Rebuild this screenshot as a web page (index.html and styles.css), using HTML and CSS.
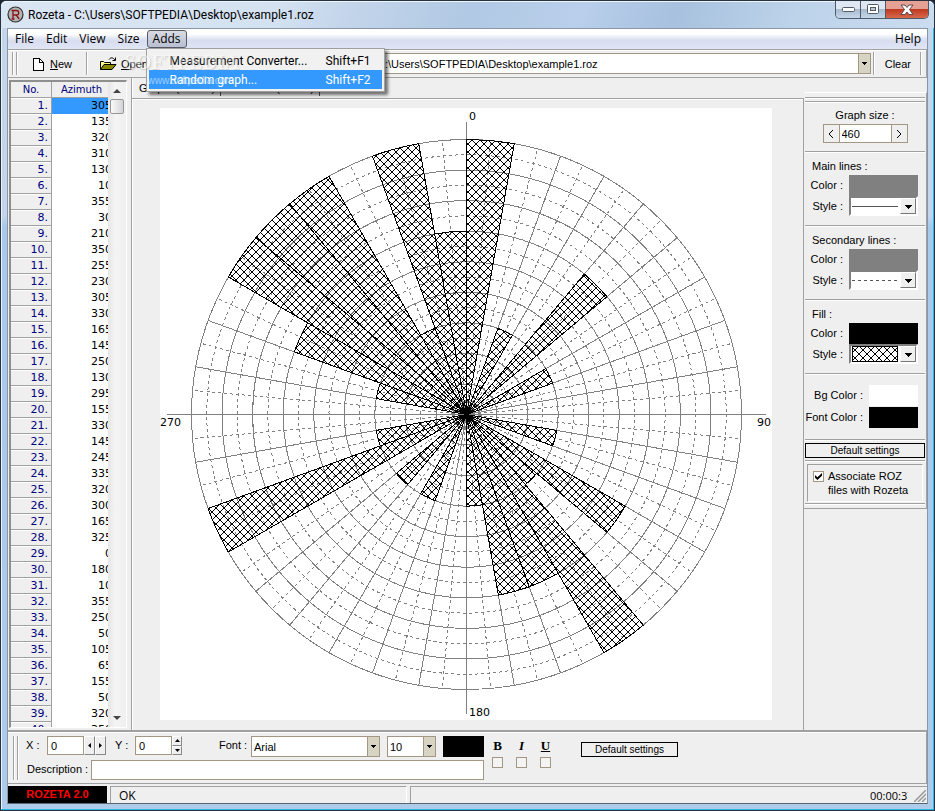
FILE: index.html
```html
<!DOCTYPE html>
<html lang="en">
<head>
<meta charset="utf-8">
<title>Rozeta</title>
<link rel="stylesheet" href="styles.css">
</head>
<body>
<div class="window">
  <header class="titlebar">
    <svg class="app-icon" width="17" height="17" viewBox="0 0 17 17" aria-hidden="true">
      <circle cx="8.500" cy="8.500" r="7.500" fill="#b4b4b4" stroke="#333" stroke-width="1.200"/>
      <path d="M6 13V4.500h3.500a2.200 2.200 0 0 1 0 4.500H6M9.200 9l3 4M4.500 4.500H7M4.500 13h3" fill="none" stroke="#8a1414" stroke-width="1.300"/>
    </svg>
    <h1 class="title">Rozeta - C:\Users\SOFTPEDIA\Desktop\example1.roz</h1>
    <div class="caption-buttons">
      <button class="caption" aria-label="Minimize"><svg width="13" height="6"><rect x=".5" y=".5" width="12" height="4" rx="1" fill="#fff" stroke="#555b66"/></svg></button>
      <button class="caption" aria-label="Maximize"><svg width="13" height="11"><rect x=".5" y=".5" width="11" height="9" rx="1" fill="#fff" stroke="#555b66"/><rect x="3.500" y="3.500" width="5" height="3" fill="#b9c9da" stroke="#555b66"/></svg></button>
      <button class="caption close" aria-label="Close"><svg width="14" height="12"><path d="M1 1h4l2 2.500L9 1h4L9.500 5.500 13 10.500H9L7 8l-2 2.500H1l3.500-5z" fill="#fff" stroke="#5b4650"/></svg></button>
    </div>
  </header>

  <div class="client">
    <nav class="menubar">
      <button class="menu">File</button>
      <button class="menu">Edit</button>
      <button class="menu">View</button>
      <button class="menu">Size</button>
      <div class="menu-holder">
        <button class="menu open">Adds</button>
        <div class="dropdown">
          <button class="item"><span>Measurement Converter...</span><span class="key">Shift+F1</span></button>
          <button class="item selected"><span>Random graph...</span><span class="key">Shift+F2</span></button>
          <span class="mark">SOFTPEDIA</span>
          <span class="mark-url">www.softpedia.com</span>
        </div>
      </div>
      <button class="menu help">Help</button>
    </nav>

    <div class="toolbar">
      <i class="grip"></i>
      <button class="tool new">
        <svg width="12" height="14" viewBox="0 0 12 14" shape-rendering="crispEdges"><path d="M1 1h6l4 4v8H1z" fill="#fff" stroke="#000"/><path d="M7 1v4h4" fill="none" stroke="#000"/></svg>
        <span><u>N</u>ew</span></button>
      <i class="bar"></i>
      <button class="tool folder">
        <svg width="17" height="14" viewBox="0 0 17 14"><path d="M.5 12.500v-8h3l1 1h6v2" fill="#ffff80" stroke="#000"/><path d="M.5 12.500 4 7.500h12l-4 5z" fill="#8a8a00" stroke="#000"/><path d="M9 2.500c2-2.500 4-2 6 .5M15.500.5v3h-3" fill="none" stroke="#000"/></svg>
        <span><u>O</u>pen</span></button>
      <select class="combo path" aria-label="File path"><option>C:\Users\SOFTPEDIA\Desktop\example1.roz</option></select>
      <i class="bar"></i>
      <button class="tool">Clear</button>
      <i class="bar"></i>
    </div>

    <main class="workspace">
      <section class="data">
        <div class="grid-clip">
          <table class="grid">
            <thead><tr><th class="no">No.</th><th>Azimuth</th></tr></thead>
            <tbody id="rows"></tbody>
          </table>
        </div>
        <div class="scroll">
          <svg class="arrow" width="8" height="4"><path d="M0 4 4 0l4 4z" fill="#444"/></svg>
          <i class="thumb"></i>
          <svg class="arrow down" width="8" height="4"><path d="M0 0l4 4 4-4z" fill="#444"/></svg>
        </div>
      </section>

      <section class="graph">
        <div class="tabs">
          <button class="tab">Graph&nbsp; (Ctrl+G)</button>
          <button class="tab">Statistics&nbsp; (Ctrl+T)</button>
        </div>
        <div class="page">
          <svg id="rose" class="rose" width="612" height="612" viewBox="0 0 612 612" role="img" aria-label="Rose diagram">
            <defs><pattern id="cross" width="8" height="8" patternUnits="userSpaceOnUse"><path d="M-1-1 9 9M9-1-1 9" stroke="#000" shape-rendering="crispEdges"/></pattern></defs>
            <g id="main-lines" class="main-lines"></g>
            <g id="dotted-lines" class="dotted-lines"></g>
            <g id="sectors" class="sectors"></g>
            <text x="309" y="12">0</text>
            <text x="597" y="318">90</text>
            <text x="309" y="608">180</text>
            <text x="0" y="318">270</text>
          </svg>
        </div>
      </section>

      <aside class="options">
        <i class="hgrip"></i>
        <div class="group size">
          <label for="gsize">Graph size :</label>
          <div class="stepper"><button aria-label="Smaller"><svg width="6" height="8"><path d="M5 0 1 4l4 4" fill="none" stroke="#000"/></svg></button><input id="gsize" value="460"><button aria-label="Larger"><svg width="6" height="8"><path d="M1 0l4 4-4 4" fill="none" stroke="#000"/></svg></button></div>
        </div>
        <div class="group lines">
          <h2>Main lines :</h2>
          <div class="opt"><label for="c1">Color :</label><button id="c1" class="swatch gray"></button></div>
          <div class="opt"><label for="s1">Style :</label><div class="style-pick"><select id="s1"><option>Solid</option></select><svg class="sample" width="48" height="16"><path d="M1 8.500h46" stroke="#555"/></svg><i class="drop"></i></div></div>
        </div>
        <div class="group lines">
          <h2>Secondary lines :</h2>
          <div class="opt"><label for="c2">Color :</label><button id="c2" class="swatch gray"></button></div>
          <div class="opt"><label for="s2">Style :</label><div class="style-pick"><select id="s2"><option>Dotted</option></select><svg class="sample" width="48" height="16"><path d="M1 8.500h46" stroke="#555" stroke-dasharray="3 3"/></svg><i class="drop"></i></div></div>
        </div>
        <div class="group lines">
          <h2>Fill :</h2>
          <div class="opt"><label for="c3">Color :</label><button id="c3" class="swatch black"></button></div>
          <div class="opt"><label for="s3">Style :</label><div class="style-pick"><select id="s3"><option>Cross</option></select><svg class="sample" width="48" height="16"><rect x="1.500" y=".5" width="45" height="15" fill="url(#cross)" stroke="#000"/></svg><i class="drop"></i></div></div>
        </div>
        <div class="group colors">
          <div class="opt"><label for="c4">Bg Color :</label><button id="c4" class="swatch small white"></button></div>
          <div class="opt"><label for="c5">Font Color :</label><button id="c5" class="swatch small black"></button></div>
        </div>
        <div class="group reset"><button class="flat">Default settings</button></div>
        <div class="group assoc"><label><input type="checkbox" class="check" checked><span>Associate ROZ<br>files with Rozeta</span></label></div>
      </aside>
    </main>

    <div class="textbar">
      <i class="grip"></i>
      <div class="fields">
        <div class="line">
          <label class="lx" for="x">X :</label><input id="x" class="num" value="0">
          <div class="spin wide"><button aria-label="Left"><svg width="3" height="5"><path d="M3 0 0 2.500 3 5z"/></svg></button><button aria-label="Right"><svg width="3" height="5"><path d="M0 0l3 2.500L0 5z"/></svg></button></div>
          <label class="ly" for="y">Y :</label><input id="y" class="num" value="0">
          <div class="spin tall"><button aria-label="Up"><svg width="5" height="3"><path d="M0 3 2.500 0 5 3z"/></svg></button><button aria-label="Down"><svg width="5" height="3"><path d="M0 0l2.500 3L5 0z"/></svg></button></div>
          <label class="lf" for="font">Font :</label>
          <select id="font" class="combo face"><option>Arial</option></select>
          <select class="combo pt" aria-label="Font size"><option>10</option></select>
          <button class="ink" aria-label="Text color"></button>
        </div>
        <div class="line"><label class="ld" for="desc">Description :</label><input id="desc" class="desc"></div>
      </div>
      <div class="styles">
        <label><b>B</b><input type="checkbox" class="check"></label>
        <label><b><em>I</em></b><input type="checkbox" class="check"></label>
        <label><b><u>U</u></b><input type="checkbox" class="check"></label>
      </div>
      <button class="flat text-reset">Default settings</button>
    </div>

    <footer class="status">
      <strong class="brand">ROZETA 2.0</strong>
      <span class="cell ok">OK</span>
      <span class="cell rest"><span class="clock">00:00:37</span></span>
      <svg class="size-grip" width="12" height="12"><path d="M0 12 12 0M4 12l8-8M8 12l4-4" stroke="#999" stroke-width="1.500"/></svg>
    </footer>
  </div>
</div>
<script src="script.js"></script>
</body>
</html>
```
FILE: styles.css
```css
* { box-sizing: border-box; }
body { margin: 0; height: 100vh; overflow: hidden; background: #1c2430; font: 11px/14px "Liberation Sans", Arial, sans-serif; color: #000; }
button, input, select { font: inherit; color: inherit; margin: 0; padding: 0; border: 0; border-radius: 0; background: none; appearance: none; }
h1, h2 { margin: 0; font: inherit; }
i { display: block; flex: none; }
svg { display: block; flex: none; }

.window { height: 100vh; padding: 0 6px 6px; display: flex; flex-direction: column; border: 1px solid #26323f; border-radius: 6px 6px 0 0; box-shadow: inset -1px -1px #28b8e8, inset 1px 1px #e8f3fc; background: linear-gradient(180deg, #c5d6ea 0, #c3d5ec 215px, #a9c9eb 225px, #aecbea 100%); }
.titlebar { flex: none; height: 27px; display: flex; align-items: center; gap: 4px; margin: 0 -6px; padding: 0 0 0 6px; border-radius: 6px 6px 0 0; background: linear-gradient(110deg, #dbe6f3 0, #d3e1f1 30%, #c2d4ea 38%, #b1c9e4 50%, #b9cfeb 62%, #a7c1de 72%, #bdd3ea 85%, #cbdcef 100%); box-shadow: inset 0 1px #eef6fd; }
.title { flex: 1; font: 12px/18px Roboto, "Open Sans", sans-serif; white-space: nowrap; }
.caption-buttons { align-self: flex-start; display: flex; margin-right: 5px; border: 1px solid #4d5a6c; border-top: 0; border-radius: 0 0 5px 5px; overflow: hidden; }
.caption { width: 25px; height: 17px; display: grid; place-items: center; border-right: 1px solid #4d5a6c; background: linear-gradient(#dfe8f2 0 45%, #a9bbcf 50%, #c4d6e8); }
.caption.close { width: 42px; border: 0; background: linear-gradient(#e5a193 0 45%, #bf3a22 50%, #d8694a); }

.client { flex: 1; min-height: 0; display: flex; flex-direction: column; background: #efefef; border: 1px solid #8a96a5; border-bottom-color: #596670; }

.menubar { flex: none; height: 20px; display: flex; align-items: center; padding: 0 1px; background: linear-gradient(#fff 0 25%, #e4e8f4 45%, #d7dcef 60%, #e1e6f6); font: 12px/16px "Open Sans", "Noto Sans", sans-serif; }
.menu { height: 18px; padding: 0 6px; white-space: nowrap; }
.menu.open { margin: 0 0 0 1px; padding: 0 5px; border: 1px solid #555a66; border-radius: 3px; background: linear-gradient(#d9dbe2, #b9bfd2); }
.menu.help { margin-left: auto; padding-right: 5px; }
.menu-holder { position: relative; }
.dropdown { position: absolute; z-index: 5; top: 18px; left: 0; width: 239px; padding: 2px; border: 1px solid #a0a0a0; background: #f1f1f1; box-shadow: 3px 3px 3px #0008; font-family: Roboto, "Open Sans", sans-serif; }
.item { width: 100%; height: 19px; display: flex; justify-content: space-between; align-items: center; padding: 0 11px 0 21px; white-space: nowrap; }
.item.selected { background: #3399ff; color: #fff; }
.mark { position: absolute; left: -22px; top: 3px; font: bold 20px/20px "Liberation Serif", serif; color: #fff; opacity: .4; text-shadow: 1px 1px 1px #999; pointer-events: none; }
.mark-url { position: absolute; left: 1px; top: 26px; font: 10px/12px "Liberation Sans", sans-serif; color: #fff; opacity: .5; pointer-events: none; }

.toolbar { flex: none; height: 29px; display: flex; align-items: center; padding: 2px 4px; border: 1px solid #a2a2a2; border-width: 1px 1px 1px 0; box-shadow: inset 0 1px #fff; }
.grip { width: 5px; align-self: stretch; border: 1px solid #a2a2a2; border-width: 0 1px; box-shadow: inset 1px 0 #fff, 1px 0 #fff; }
.bar { width: 2px; align-self: stretch; background: linear-gradient(90deg, #a2a2a2 50%, #fff 50%); }
.tool { display: flex; align-items: center; gap: 6px; padding: 0 10px; white-space: nowrap; }
.tool.new { padding: 0 14px 0 15px; }
.tool.folder { gap: 4px; padding: 0 12px; }
.combo { height: 21px; padding: 0 14px 0 2px; border: 1px solid #a39783; background: linear-gradient(#000, #000) right 3px top 8px / 5px 1px no-repeat, linear-gradient(#000, #000) right 4px top 9px / 3px 1px no-repeat, linear-gradient(#000, #000) right 5px top 10px / 1px 1px no-repeat, linear-gradient(90deg, #a39783 1px, #d8d4c4 1px) right / 12px 100% no-repeat, #fff; }
.path { flex: 1; margin: 0 2px 0 212px; padding-left: 4px; }
.path + .bar + .tool { padding-right: 9px; }

.workspace { flex: 1; min-height: 0; display: flex; border-bottom: 2px solid #a0a0a0; }
.data { flex: none; width: 118px; display: flex; margin: 2px 0 2px 1px; border: 2px solid #8f8f8f; border-width: 2px 1px 1px 2px; border-right-color: #fff; border-bottom-color: #fff; overflow: hidden; }
.grid-clip { width: 97px; overflow: hidden; background: #fff; }
.grid { width: 101px; table-layout: fixed; border-collapse: separate; border-spacing: 0; font: 11px/14px "DejaVu Sans", Verdana, sans-serif; }
.grid th, .grid td { height: 16px; padding: 0; }
.grid thead th { font-size: 10px; font-weight: 400; color: #000080; background: #efefef; border: 1px solid #a0a0a0; border-width: 0 1px 1px 0; }
.grid .no { width: 41px; }
.grid tbody th { padding-right: 3px; font-weight: 400; text-align: right; color: #000080; background: #efefef; border: 1px solid #a0a0a0; border-width: 0 1px 1px 0; box-shadow: inset 0 1px #fff; }
.grid td { text-align: right; }
.grid .current td { background: #3399ff; }
.scroll { flex: 1; display: flex; flex-direction: column; align-items: center; padding: 7px 1px; background: linear-gradient(90deg, #e6e6e6, #f4f4f4 40%, #efefef); }
.thumb { width: 14px; height: 15px; margin-top: 6px; border: 1px solid #979797; border-radius: 2px; background: linear-gradient(90deg, #fafafa, #d4d4d8); }
.arrow.down { margin-top: auto; }

.graph { flex: 1; min-width: 0; display: flex; flex-direction: column; margin-left: 4px; border-left: 1px solid #a0a0a0; box-shadow: inset 1px 0 #fff; }
.tabs { flex: none; height: 21px; display: flex; padding: 2px 0 2px 2px; border-bottom: 1px solid #a0a0a0; box-shadow: 0 1px #fff; }
.tab { padding: 0 5px; border-right: 1px solid #555; white-space: nowrap; }
.page { flex: 1; min-height: 0; display: flex; justify-content: center; padding: 9px 3px 0 0; border-right: 1px solid #a0a0a0; }
.rose { background: #fff; }
.rose text { font: 11px "DejaVu Sans", Verdana, sans-serif; }
.main-lines, .dotted-lines { fill: none; stroke: #808080; shape-rendering: crispEdges; }
.dotted-lines { stroke-dasharray: 3 3; }
.sectors { fill: url(#cross); stroke: #000; shape-rendering: crispEdges; }

.options { flex: none; width: 123px; align-self: flex-start; margin-top: 14px; padding: 0 1px 4px; border: 1px solid #a0a0a0; border-top-color: #fff; border-left: 0; }
.hgrip { height: 5px; margin-top: 4px; border: 1px solid #a2a2a2; border-width: 1px 0; box-shadow: inset 0 1px #fff, 0 1px #fff; }
.group { border-bottom: 1px solid #a0a0a0; box-shadow: 0 1px #fff; }
.group.size { height: 50px; display: flex; flex-direction: column; align-items: center; gap: 2px; padding-top: 6px; }
.stepper { display: flex; height: 19px; border: 1px solid #a39783; }
.stepper button { width: 15px; display: grid; place-items: center; }
.stepper input { width: 53px; padding-left: 2px; background: #fff; border: 1px solid #a39783; border-width: 0 1px; }
.lines { height: 74px; padding: 7px 7px 0; }
.lines h2 { height: 15px; }
.opt { display: flex; justify-content: flex-end; align-items: center; gap: 6px; height: 22px; white-space: nowrap; }
.swatch { flex: none; width: 69px; height: 21px; }
.swatch.small { width: 49px; }
.gray { background: #808080; }
.white { background: #fff; }
.black { background: #000; }
.lines .opt:last-child { height: 20px; }
.style-pick { position: relative; width: 69px; height: 20px; border: 2px solid #808080; border-color: #808080 #fff #fff #808080; background: #fff; }
.style-pick select { width: 100%; height: 100%; color: transparent; }
.sample { position: absolute; left: 0; top: 0; pointer-events: none; }
.drop { position: absolute; right: 0; top: 0; width: 16px; height: 16px; border: 1px solid #fff; border-color: #fff #777 #777 #fff; background: linear-gradient(#000, #000) 4px 6px / 7px 1px no-repeat, linear-gradient(#000, #000) 5px 7px / 5px 1px no-repeat, linear-gradient(#000, #000) 6px 8px / 3px 1px no-repeat, linear-gradient(#000, #000) 7px 9px / 1px 1px no-repeat, #efefef; pointer-events: none; }
.colors { height: 66px; padding: 10px 7px 0 0; }
.reset { height: 21px; padding-top: 3px; }
.flat { height: 15px; width: 100%; border: 1px solid #000; font-size: 10px; line-height: 13px; }
.assoc { height: 43px; padding: 3px 2px 2px; }
.assoc label { display: flex; gap: 4px; padding: 4px 4px 4px 5px; border: 1px solid #a0a0a0; border-right-color: #fff; border-bottom-color: #fff; white-space: nowrap; }
.check { flex: none; width: 11px; height: 11px; border: 1px solid #a39783; background: #f4f4f4; }
.assoc .check { margin-top: 2px; background: #fff; }
.check:checked::before { content: ""; display: block; width: 7px; height: 7px; margin: 1px; background: #000; clip-path: polygon(0 30%, 35% 62%, 100% 0, 100% 38%, 35% 100%, 0 68%); }

.textbar { flex: none; height: 52px; display: flex; padding: 4px 5px 3px; border: 1px solid #a0a0a0; border-width: 0 1px 1px 0; box-shadow: inset 0 1px #fff; }
.fields { width: 458px; margin: 0 8px 0 8px; display: flex; flex-direction: column; gap: 3px; }
.line { display: flex; height: 21px; }
.line label { flex: none; padding-top: 2px; }
.lx { width: 21px; }
.ly { width: 29px; padding-left: 9px; }
.lf { width: 69px; padding-left: 37px; }
.ld { width: 65px; padding-left: 1px; }
.num { width: 37px; height: 19px; padding-left: 3px; border: 1px solid #a39783; background: #fff; }
.spin { display: flex; height: 19px; }
.spin button { flex: 1; display: grid; place-items: center; border: 1px solid #fff; border-color: #fff #888 #888 #fff; background: #efefef; }
.spin.wide { width: 22px; }
.spin.tall { width: 10px; flex-direction: column; }
.face { width: 129px; }
.pt { width: 49px; margin: 0 7px; }
.ink { flex: 1; height: 21px; background: #000; }
.desc { flex: 1; height: 20px; padding: 0 4px; border: 1px solid #a39783; background: #fff; }
.styles { display: flex; gap: 13px; padding-top: 3px; }
.styles label { display: flex; flex-direction: column; align-items: center; gap: 4px; width: 11px; font: 13px/14px "Liberation Serif", serif; }
.text-reset { width: 97px; margin: 6px 0 0 30px; }

.status { flex: none; height: 19px; display: flex; gap: 3px; padding-top: 2px; position: relative; font: 12px/17px "Open Sans", "Noto Sans", sans-serif; }
.brand { width: 99px; background: #000; color: #f00; text-align: center; font: bold 11px/17px "Liberation Sans", sans-serif; }
.cell { border: 1px solid #a0a0a0; border-width: 1px 0 0 1px; }
.ok { width: 297px; padding-left: 8px; border-right: 1px solid #fff; }
.rest { flex: 1; display: flex; justify-content: flex-end; padding-right: 19px; }
.clock { width: 38px; overflow: hidden; font-size: 11px; }
.size-grip { position: absolute; right: 1px; bottom: 1px; }
```
FILE: script.js
```js
const azimuths = [305, 135, 320, 310, 130, 10, 355, 30, 210, 350, 255, 230, 305, 330, 165, 145, 250, 130, 295, 155,
  330, 145, 245, 335, 320, 300, 165, 325, 0, 180, 10, 355, 250, 50, 105, 65, 155, 50, 320, 350];

document.getElementById('rows').innerHTML = azimuths
  .map((a, i) => `<tr${i ? '' : ' class="current"'}><th>${i + 1}.</th><td>${a}</td></tr>`).join('');

const C = 306.5, R = 275;
const point = (deg, r) => {
  const t = deg * Math.PI / 180;
  return (C + r * Math.sin(t)).toFixed(2) + ' ' + (C - r * Math.cos(t)).toFixed(2);
};

// Class start angle -> radius in thirds of the full circle
const classes = { 0: 3, 20: 1, 40: 2, 60: 1, 100: 1, 120: 2, 130: 1, 140: 3, 150: 2, 160: 2, 170: 1, 200: 1, 220: 1,
  240: 3, 250: 1, 280: 1, 290: 2, 300: 3, 310: 3, 320: 3, 330: 1, 340: 3, 350: 2 };

let solid = `<path d="M${C} 14V606M7 ${C}H606"/>`, dotted = '';
for (let i = 1; i <= 9; i++) {
  solid += `<circle cx="${C}" cy="${C}" r="${R * i / 9}"/>`;
  dotted += `<circle cx="${C}" cy="${C}" r="${R * (i - 0.5) / 9}"/>`;
}
for (let a = 0; a < 360; a += 10) {
  solid += `<path d="M${C} ${C}L${point(a, R)}"/>`;
  dotted += `<path d="M${C} ${C}L${point(a + 5, R)}"/>`;
}
document.getElementById('main-lines').innerHTML = solid;
document.getElementById('dotted-lines').innerHTML = dotted;
document.getElementById('sectors').innerHTML = Object.entries(classes).map(([a, n]) => {
  const r = R * n / 3;
  return `<path d="M${C} ${C}L${point(+a, r)}A${r} ${r} 0 0 1 ${point(+a + 10, r)}Z"/>`;
}).join('');
```
